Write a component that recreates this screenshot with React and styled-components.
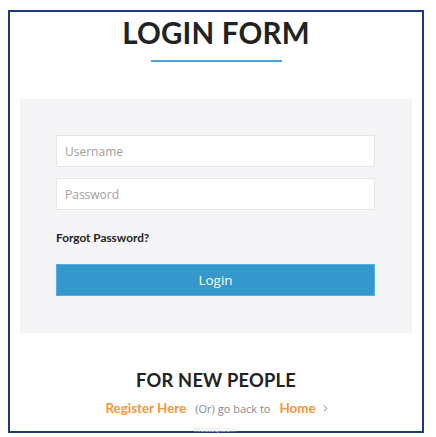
import styled, { createGlobalStyle } from "styled-components";
import { ChevronRight } from "lucide-react";

const Global = createGlobalStyle`
  html, body {
    margin: 0;
    padding: 0;
    background: #ffffff;
  }
  body {
    font-family: "Open Sans", "Liberation Sans", sans-serif;
  }
`;

const Frame = styled.div`
  margin: 10px 0 0 8px;
  width: 412px;
  height: 419px;
  border: 2px solid #1d3b7a;
  display: flex;
  flex-direction: column;
  align-items: center;
  position: relative;
`;

const Title = styled.h1`
  margin: 3px 0 0;
  font-family: "Lato", "Liberation Sans", sans-serif;
  font-weight: 700;
  font-size: 29.5px;
  line-height: 36px;
  color: #222222;
  letter-spacing: 0.2px;
`;

const Underline = styled.div`
  width: 131px;
  height: 2px;
  margin-top: 9px;
  background: #4aa3d8;
`;

const Panel = styled.div`
  align-self: stretch;
  margin: 37px 10px 0;
  height: 234px;
  box-sizing: border-box;
  padding: 36px 37px 0 36px;
  background: #f5f5f7;
  display: flex;
  flex-direction: column;
`;

const Input = styled.input`
  height: 32px;
  box-sizing: border-box;
  border: 1px solid #e6e6e6;
  background: #ffffff;
  padding: 0 8px;
  font-family: "Open Sans", "Liberation Sans", sans-serif;
  font-size: 12px;
  color: #555;
  margin-bottom: ${(p) => p.$gap || 0}px;
  outline: none;
  &::placeholder {
    color: #9e9e9e;
  }
`;

const Forgot = styled.a`
  margin-top: 21px;
  font-family: "Lato", "Liberation Sans", sans-serif;
  font-weight: 700;
  font-size: 11.8px;
  line-height: 14px;
  color: #222222;
  text-decoration: none;
`;

const Button = styled.button`
  margin-top: 19px;
  height: 32px;
  border: 1px solid #5aaee0;
  background: #3598cc;
  color: #ffffff;
  font-family: "Open Sans", "Liberation Sans", sans-serif;
  font-size: 13.5px;
  cursor: pointer;
`;

const SubTitle = styled.h2`
  margin: 35px 0 0;
  font-family: "Lato", "Liberation Sans", sans-serif;
  font-weight: 700;
  font-size: 18.3px;
  line-height: 24px;
  color: #222222;
  letter-spacing: 0.2px;
`;

const Links = styled.div`
  margin-top: 8px;
  margin-left: 4px;
  display: flex;
  align-items: center;
  gap: 9px;
`;

const OrangeLink = styled.a`
  font-family: "Lato", "Liberation Sans", sans-serif;
  font-weight: 700;
  font-size: 13.4px;
  color: #f7953b;
  text-decoration: none;
`;

const Muted = styled.span`
  font-family: "Open Sans", "Liberation Sans", sans-serif;
  font-size: 11px;
  color: #8a8a8a;
`;

const Home = styled.span`
  display: flex;
  align-items: center;
  gap: 4px;
  color: #777;
`;

const Watermark = styled.span`
  position: absolute;
  left: 184px;
  top: 413px;
  font-family: "Open Sans", "Liberation Sans", sans-serif;
  font-size: 7px;
  color: #e4e4e4;
  pointer-events: none;
`;

export default function App() {
  return (
    <>
      <Global />
      <Frame>
        <Title>LOGIN FORM</Title>
        <Underline />
        <Panel>
          <Input placeholder="Username" $gap={11} />
          <Input type="password" placeholder="Password" />
          <Forgot href="#">Forgot Password?</Forgot>
          <Button>Login</Button>
        </Panel>
        <SubTitle>FOR NEW PEOPLE</SubTitle>
        <Links>
          <OrangeLink href="#">Register Here</OrangeLink>
          <Muted>(Or) go back to</Muted>
          <Home>
            <OrangeLink href="#">Home</OrangeLink>
            <ChevronRight size={11} strokeWidth={2} />
          </Home>
        </Links>
        <Watermark>mostaql.com</Watermark>
      </Frame>
    </>
  );
}
